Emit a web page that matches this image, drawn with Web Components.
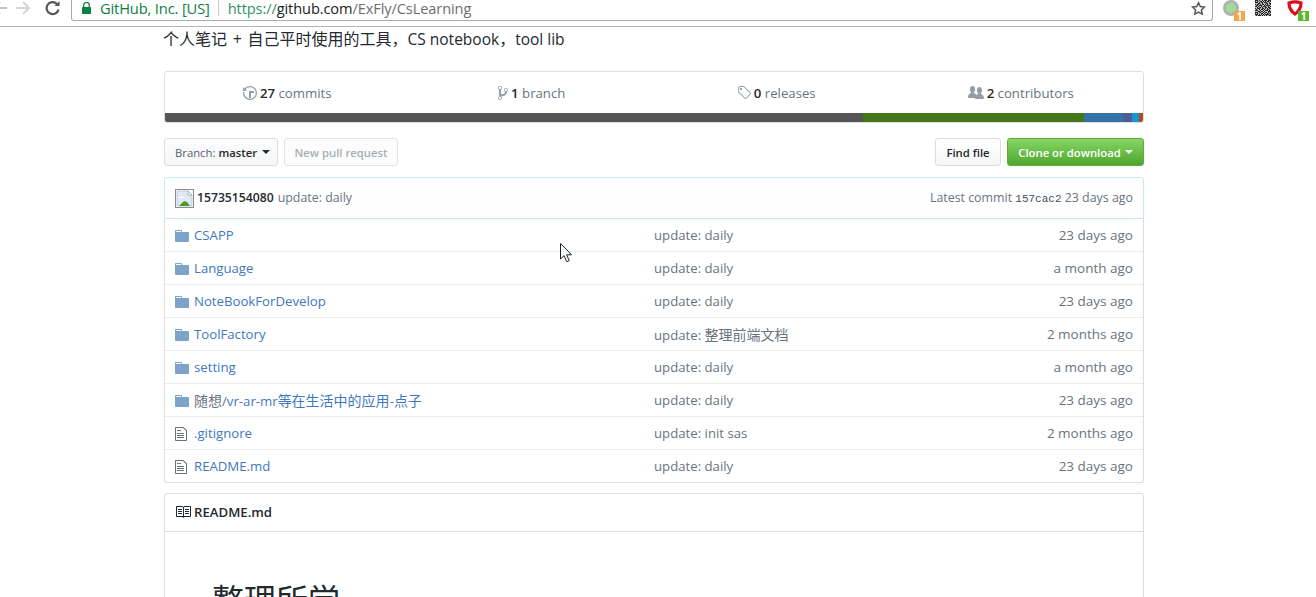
<!DOCTYPE html>
<html>
<head>
<meta charset="utf-8">
<title>ExFly/CsLearning</title>
<style>
  html, body { margin: 0; padding: 0; height: 597px; overflow: hidden; background: #fff; }
  body { font-family: "Open Sans", "Noto Sans CJK SC", sans-serif; font-size: 13px; color: #24292e; position: relative; }
  .page { width: 980px; margin-left: 164px; display: block; }
  .zh { font-size: 14px; }
  .latin { font-size: 15.5px; }
  .plus { margin: 0 1.5px; }
</style>
</head>
<body>
<browser-bar></browser-bar>
<div class="page">
  <repo-description>个人笔记<span class="plus"> + </span>自己平时使用的工具，<span class="latin">CS notebook</span>，<span class="latin">tool lib</span></repo-description>
  <repo-summary></repo-summary>
  <file-nav></file-nav>
  <commit-tease></commit-tease>
  <file-table>
    <file-row type="dir" age="23 days ago"><span slot="name">CSAPP</span>update: daily</file-row>
    <file-row type="dir" age="a month ago"><span slot="name">Language</span>update: daily</file-row>
    <file-row type="dir" age="23 days ago"><span slot="name">NoteBookForDevelop</span>update: daily</file-row>
    <file-row type="dir" age="2 months ago"><span slot="name">ToolFactory</span>update: <span class="zh">整理前端文档</span></file-row>
    <file-row type="dir" age="a month ago"><span slot="name">setting</span>update: daily</file-row>
    <file-row type="dir" age="23 days ago"><span slot="name"><span style="color:#6a737d"><span class="zh">随想</span>/</span>vr-ar-mr<span class="zh">等在生活中的应用</span>-<span class="zh">点子</span></span>update: daily</file-row>
    <file-row type="file" age="2 months ago"><span slot="name">.gitignore</span>update: init sas</file-row>
    <file-row type="file" age="23 days ago"><span slot="name">README.md</span>update: daily</file-row>
  </file-table>
  <readme-box>整理所学</readme-box>
</div>
<mouse-cursor></mouse-cursor>

<script>
const icons = {
  history: ['0 0 14 16', 'M8 13H6V6h5v2H8v5zM7 1C4.81 1 2.87 2.02 1.59 3.59L0 2v4h4L2.5 4.5C3.55 3.17 5.17 2.3 7 2.3c3.14 0 5.7 2.56 5.7 5.7s-2.56 5.7-5.7 5.7A5.71 5.71 0 0 1 1.3 8c0-.34.03-.67.09-1H.08C.03 7.33 0 7.66 0 8c0 3.86 3.14 7 7 7s7-3.14 7-7-3.14-7-7-7z'],
  branch: ['0 0 10 16', 'M10 5c0-1.11-.89-2-2-2a1.993 1.993 0 0 0-1 3.72v.3c-.02.52-.23.98-.63 1.38-.4.4-.86.61-1.38.63-.83.02-1.48.16-2 .45V4.72a1.993 1.993 0 0 0-1-3.72C.88 1 0 1.89 0 3a2 2 0 0 0 1 1.72v6.56c-.59.35-1 .99-1 1.72 0 1.11.89 2 2 2 1.11 0 2-.89 2-2 0-.53-.2-1-.53-1.36.09-.06.48-.41.59-.47.25-.11.56-.17.94-.17 1.05-.05 1.95-.45 2.75-1.25S8.95 7.77 9 6.73h-.02C9.59 6.37 10 5.73 10 5zM2 1.8c.66 0 1.2.55 1.2 1.2 0 .65-.55 1.2-1.2 1.2C1.35 4.2.8 3.65.8 3c0-.65.55-1.2 1.2-1.2zm0 12.41c-.66 0-1.2-.55-1.2-1.2 0-.65.55-1.2 1.2-1.2.65 0 1.2.55 1.2 1.2 0 .65-.55 1.2-1.2 1.2zm6-8c-.66 0-1.2-.55-1.2-1.2 0-.65.55-1.2 1.2-1.2.65 0 1.2.55 1.2 1.2 0 .65-.55 1.2-1.2 1.2z'],
  tag: ['0 0 14 16', 'M7.73 1.73C7.26 1.26 6.62 1 5.96 1H3.5C2.13 1 1 2.13 1 3.5v2.47c0 .66.27 1.3.73 1.77l6.06 6.06c.39.39 1.02.39 1.41 0l4.59-4.59a.996.996 0 0 0 0-1.41L7.73 1.73zM2.38 7.09c-.31-.3-.47-.7-.47-1.13V3.5c0-.88.72-1.59 1.59-1.59h2.47c.42 0 .83.16 1.13.47l6.14 6.13-4.73 4.73-6.13-6.15zM3.01 3h2v2H3V3h.01z'],
  people: ['0 0 16 16', 'M16 12.999c0 .439-.45 1-1 1H7.995c-.539 0-.994-.447-.995-.999H1c-.54 0-1-.561-1-1 0-2.634 3-4 3-4s.229-.409 0-1c-.841-.621-1.058-.59-1-3 .058-2.419 1.367-3 2.5-3s2.442.58 2.5 3c.058 2.41-.159 2.379-1 3-.229.59 0 1 0 1s1.549.711 2.42 2.088C9.196 9.369 10 8.999 10 8.999s.229-.409 0-1c-.841-.62-1.058-.59-1-3 .058-2.419 1.367-3 2.5-3s2.437.581 2.495 3c.059 2.41-.158 2.38-1 3-.229.59 0 1 0 1s3.005 1.366 3.005 4z'],
  dir: ['0 0 14 16', 'M13 4H7V3c0-.66-.31-1-1-1H1c-.55 0-1 .45-1 1v10c0 .55.45 1 1 1h12c.55 0 1-.45 1-1V5c0-.55-.45-1-1-1zM6 4H1V3h5v1z'],
  file: ['0 0 12 16', 'M6 5H2V4h4v1zM2 8h7V7H2v1zm0 2h7V9H2v1zm0 2h7v-1H2v1zm10-7.5V14c0 .55-.45 1-1 1H1c-.55 0-1-.45-1-1V2c0-.55.45-1 1-1h7.5L12 4.5zM11 5L8 2H1v12h10V5z'],
  book: ['0 0 16 16', 'M3 5h4v1H3V5zm0 3h4V7H3v1zm0 2h4V9H3v1zm11-5h-4v1h4V5zm0 2h-4v1h4V7zm0 2h-4v1h4V9zm2-6v9c0 .55-.45 1-1 1H9.5l-1 1-1-1H2c-.55 0-1-.45-1-1V3c0-.55.45-1 1-1h5.5l1 1 1-1H15c.55 0 1 .45 1 1zm-8 .5L7.5 3H2v9h6V3.5zm7-.5H9.5l-.5.5V12h6V3z']
};

function icon(name, w, h, color) {
  const [box, d] = icons[name];
  return `<svg width="${w}" height="${h}" viewBox="${box}" style="display:block;flex:none" fill="${color}"><path d="${d}"/></svg>`;
}

// fixed noise for the QR extension button
function qrCells() {
  const rows = ['1110100101110111','1010011010101101','1110101101110010','0001100100011011','1011010110101001','0110111001011110','1101001011100101','0010110100110110','1011100110101011','0100101101001100','1110010010111010','0001101101000111','1110110010110101','1010001101001010','1110101010111101','0101110101010011'];
  let out = '';
  rows.forEach((row, y) => [...row].forEach((c, x) => {
    if (c === '1') out += `<rect x="${x}" y="${y}" width="1" height="1"/>`;
  }));
  return out;
}

class BrowserBar extends HTMLElement {
  connectedCallback() {
    this.attachShadow({ mode: 'open' });
    this.shadowRoot.innerHTML = `
      <style>
        :host { display: flex; align-items: flex-start; height: 26px; box-sizing: content-box; background: #fff; border-bottom: 1px solid #b4b4b4; font-family: "Open Sans", sans-serif; }
        .nav { display: flex; width: 71px; flex: none; height: 16px; align-items: center; }
        .nav svg { flex: none; display: block; }
        .back { margin-left: -8px; }
        .fwd { margin-left: 7px; }
        .reload { margin-left: 14px; }
        .omni { flex: none; width: 1140px; height: 16px; padding-bottom: 4px; box-sizing: content-box; border: 1px solid #a9a9a9; border-top: 0; border-radius: 0 0 3px 3px; display: flex; align-items: center; font-size: 14.6px; white-space: nowrap; }
        .lock { margin-left: 10px; }
        .org { color: #0b8043; margin-left: 9px; font-size: 14.7px; letter-spacing: -0.15px; }
        .sep { width: 1px; height: 16px; background: #c8c8c8; margin: 0 9px 0 8px; }
        .url { color: #6d6d6d; letter-spacing: -0.1px; }
        .url b { font-weight: 400; color: #222; }
        .url i { font-style: normal; color: #0b8043; opacity: .85; }
        .star { margin-left: auto; margin-right: 6px; }
        .ext { display: flex; flex: none; height: 22px; }
        .badge { position: absolute; font: 700 10px/10px "Open Sans", sans-serif; color: #fff; width: 11px; height: 10px; text-align: center; }
        .e1 { position: relative; margin-left: 10px; width: 20px; }
        .e1 .ring { width: 10px; height: 10px; border-radius: 50%; border: 3px solid #b2b2b2; background: #9ddc9a; }
        .e1 .badge { left: 11px; top: 11px; background: #f0a64c; }
        .e2 { margin-left: 12px; }
        .e3 { position: relative; margin-left: 16px; width: 20px; }
        .e3 .badge { left: 11px; top: 11px; background: #5fb832; }
      </style>
      <div class="nav">
        <svg class="back" width="16" height="16" viewBox="0 0 16 16" fill="none" stroke="#c4c4c4" stroke-width="2"><path d="M15 8H2M8 2 2 8l6 6"/></svg>
        <svg class="fwd" width="16" height="16" viewBox="0 0 16 16" fill="none" stroke="#d6d6d6" stroke-width="2"><path d="M1 8h13M8 2l6 6-6 6"/></svg>
        <svg class="reload" width="16" height="16" viewBox="0 0 16 16" fill="none" stroke="#555" stroke-width="2.2"><path d="M13.5 9.5A6 6 0 1 1 12 4"/><path d="M14.5 1v5h-5z" fill="#555" stroke="none"/></svg>
      </div>
      <div class="omni">
        <svg class="lock" width="9" height="12" viewBox="0 0 9 12"><path d="M1.7 5V3.2a2.8 2.8 0 0 1 5.6 0V5" fill="none" stroke="#0b8043" stroke-width="1.3"/><rect y="5" width="9" height="7" rx=".6" fill="#0b8043"/></svg>
        <span class="org">GitHub, Inc. [US]</span>
        <span class="sep"></span>
        <span class="url"><i>https://</i><b>github.com</b>/ExFly/CsLearning</span>
        <svg class="star" width="15" height="15" viewBox="0 0 24 24" fill="none" stroke="#555" stroke-width="2.4"><path d="M12 2.8l2.9 6.1 6.6.8-4.9 4.6 1.3 6.6-5.9-3.3-5.9 3.3 1.3-6.6L2.5 9.7l6.6-.8z"/></svg>
      </div>
      <div class="ext">
        <div class="e1"><div class="ring"></div><span class="badge">1</span></div>
        <svg class="e2" width="16" height="16" viewBox="0 0 16 16" fill="#2c2c2c" style="background:#b5b5b5">${qrCells()}</svg>
        <div class="e3">
          <svg width="16" height="16" viewBox="0 0 16 16" fill="none" stroke="#d8101c" stroke-width="3.2"><path d="M2 3c4-1.400 8-1.400 12 0 0 4.600-1.600 8-6 11C3.600 11 2 7.600 2 3z"/></svg>
          <span class="badge">1</span>
        </div>
      </div>`;
  }
}

class RepoDescription extends HTMLElement {
  connectedCallback() {
    this.attachShadow({ mode: 'open' });
    this.shadowRoot.innerHTML = `
      <style>
        :host { display: block; height: 44px; font-size: 16px; line-height: 24px; color: #24292e; margin-left: -1px; white-space: nowrap; }
      </style>
      <slot></slot>`;
  }
}

class RepoSummary extends HTMLElement {
  connectedCallback() {
    this.attachShadow({ mode: 'open' });
    const stat = (ic, n, label) => `<div class="stat">${ic}<span><b>${n}</b> ${label}</span></div>`;
    this.shadowRoot.innerHTML = `
      <style>
        :host { display: block; border: 1px solid #ddd; border-radius: 3px; overflow: hidden; margin-bottom: 15px; }
        .stats { display: grid; grid-template-columns: repeat(4, 1fr); height: 41px; }
        .stat { display: flex; align-items: center; justify-content: center; gap: 3px; color: #6a737d; font-size: 13.2px; white-space: nowrap; }
        b { font-weight: 600; color: #24292e; }
        .bar { display: flex; height: 9px; }
      </style>
      <div class="stats">
        ${stat(icon('history', 14, 16, '#959da5'), 27, 'commits')}
        ${stat(icon('branch', 10, 16, '#959da5'), 1, 'branch')}
        ${stat(icon('tag', 14, 16, '#959da5'), 0, 'releases')}
        ${stat(icon('people', 16, 16, '#959da5'), 2, 'contributors')}
      </div>
      <div class="bar">
        <span style="flex:698;background:#555"></span>
        <span style="flex:221;background:#427819"></span>
        <span style="flex:39;background:#3572a5"></span>
        <span style="flex:9;background:#4f5d95"></span>
        <span style="flex:7;background:#0e9acf"></span>
        <span style="flex:4;background:#b7472a"></span>
      </div>`;
  }
}

class FileNav extends HTMLElement {
  connectedCallback() {
    this.attachShadow({ mode: 'open' });
    this.shadowRoot.innerHTML = `
      <style>
        :host { display: flex; align-items: stretch; height: 28px; margin-bottom: 11px; font-size: 11.3px; font-weight: 600; white-space: nowrap; }
        .btn { display: flex; align-items: center; box-sizing: border-box; padding: 0 10px; border: 1px solid #dcdddf; border-radius: 3px; background: linear-gradient(#fdfdfe, #f3f5f6); color: #24292e; }
        .branch { width: 114px; font-weight: 400; color: #586069; gap: 3px; }
        .branch b { font-weight: 600; color: #24292e; }
        .caret { width: 0; height: 0; border: 4px solid transparent; border-top-color: #24292e; border-bottom: 0; margin-left: 2px; }
        .pull { width: 114px; margin-left: 6px; background: #fcfcfd; color: #a9aeb3; border-color: #e1e3e5; justify-content: center; padding: 0; }
        .find { margin-left: auto; width: 66px; justify-content: center; padding: 0; background: linear-gradient(#fff, #f5f6f7); }
        .clone { width: 137px; margin-left: 6px; justify-content: center; padding: 0; gap: 4px; color: #fff; border-color: #5cab3c; background: linear-gradient(#86d665, #4ea62d); }
        .clone .caret { border-top-color: #fff; margin-left: 0; }
      </style>
      <div class="btn branch"><span>Branch:</span><b>master</b><span class="caret"></span></div>
      <div class="btn pull">New pull request</div>
      <div class="btn find">Find file</div>
      <div class="btn clone">Clone or download<span class="caret"></span></div>`;
  }
}

class CommitTease extends HTMLElement {
  connectedCallback() {
    this.attachShadow({ mode: 'open' });
    this.shadowRoot.innerHTML = `
      <style>
        :host { display: flex; align-items: center; box-sizing: border-box; height: 42px; padding: 0 10px 2px; background: #fefeff; border: 1px solid #c5e9f2; border-radius: 3px 3px 0 0; font-size: 12.4px; color: #6a737d; white-space: nowrap; }
        .avatar { display: block; flex: none; margin-right: 3px; margin-top: 2px; }
        .user { font-weight: 600; color: #24292e; margin-right: 4px; font-size: 12.2px; }
        .right { margin-left: auto; }
        code { font-family: "Liberation Mono", monospace; font-size: 11px; color: #444d56; }
      </style>
      <svg class="avatar" width="19" height="19" viewBox="0 0 19 19">
        <rect x=".5" y=".5" width="18" height="18" fill="#fff" stroke="#8b8b8b"/>
        <path d="M2 2h11l4 4v11H2z" fill="#dfe9f5" stroke="#a8b5c4" stroke-width=".6"/>
        <path d="M4 17l5-5 3 1 3 4z" fill="#4f9a2b"/>
        <path d="M3 9c2-2 5-2 7 0z" fill="#fff"/>
        <path d="M13 2v4h4z" fill="#fff" stroke="#8b8b8b" stroke-width=".6"/>
      </svg>
      <span class="user">15735154080</span>
      <span>update: daily</span>
      <span class="right">Latest commit <code>157cac2</code> 23 days ago</span>`;
  }
}

class FileTable extends HTMLElement {
  connectedCallback() {
    this.attachShadow({ mode: 'open' });
    this.shadowRoot.innerHTML = `
      <style>
        :host { display: block; border: 1px solid #ddd; border-top: 0; border-radius: 0 0 3px 3px; margin-bottom: 10px; }
      </style>
      <slot></slot>`;
  }
}

class FileRow extends HTMLElement {
  connectedCallback() {
    this.attachShadow({ mode: 'open' });
    const dir = this.getAttribute('type') === 'dir';
    this.shadowRoot.innerHTML = `
      <style>
        :host { display: flex; align-items: center; box-sizing: border-box; height: 33px; padding: 0 10px; border-top: 1px solid #eaecef; font-size: 13.2px; color: #6a737d; white-space: nowrap; }
        :host(:first-child) { border-top: 0; height: 32px; }
        .ic { width: 19px; flex: none; margin-top: 1px; }
        .name { width: 460px; flex: none; color: #4078c0; }
        .msg { flex: 1; }
        .age { font-size: 13.5px; }
      </style>
      <span class="ic">${dir ? icon('dir', 14, 16, '#7ea3cb') : icon('file', 12, 16, '#6a737d')}</span>
      <span class="name"><slot name="name"></slot></span>
      <span class="msg"><slot></slot></span>
      <span class="age">${this.getAttribute('age')}</span>`;
  }
}

class ReadmeBox extends HTMLElement {
  connectedCallback() {
    this.attachShadow({ mode: 'open' });
    this.shadowRoot.innerHTML = `
      <style>
        :host { display: block; border: 1px solid #ddd; border-radius: 3px 3px 0 0; }
        .head { display: flex; align-items: center; gap: 3px; box-sizing: border-box; height: 38px; padding: 0 10px 2px; border-bottom: 1px solid #ddd; font-size: 13.2px; font-weight: 600; color: #24292e; }
        .head svg { margin-top: 1px; }
        .body { padding: 46px 47px 0; }
        h1 { margin: 0; font-size: 32px; line-height: 40px; font-weight: 400; color: #24292e; font-family: "Noto Sans CJK SC", sans-serif; }
      </style>
      <div class="head">${icon('book', 16, 16, '#24292e')}<span>README.md</span></div>
      <div class="body"><h1><slot></slot></h1></div>`;
  }
}

class MouseCursor extends HTMLElement {
  connectedCallback() {
    this.attachShadow({ mode: 'open' });
    this.shadowRoot.innerHTML = `
      <style>
        :host { position: absolute; left: 560px; top: 243px; display: block; width: 13px; height: 20px; }
      </style>
      <svg width="13" height="20" viewBox="0 0 13 20" style="display:block"><path d="M.5.5v15.5l3.6-3.3 2.6 6 2.500-1.100-2.600-5.800h5z" fill="#fff" stroke="#1a2230" stroke-width="1"/></svg>`;
  }
}

customElements.define('browser-bar', BrowserBar);
customElements.define('repo-description', RepoDescription);
customElements.define('repo-summary', RepoSummary);
customElements.define('file-nav', FileNav);
customElements.define('commit-tease', CommitTease);
customElements.define('file-table', FileTable);
customElements.define('file-row', FileRow);
customElements.define('readme-box', ReadmeBox);
customElements.define('mouse-cursor', MouseCursor);
</script>
</body>
</html>
